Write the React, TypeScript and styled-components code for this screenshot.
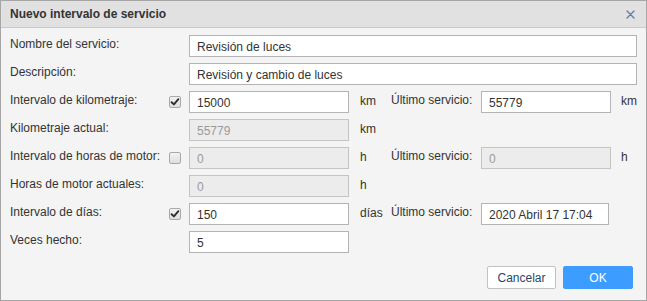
import React from "react";
import styled, { createGlobalStyle } from "styled-components";

const Global = createGlobalStyle`
  html, body { margin: 0; padding: 0; background: #ffffff; }
  body { font-family: "Liberation Sans", Arial, sans-serif; font-size: 12px; color: #333; }
  * { box-sizing: border-box; }
`;

const Dialog = styled.div`
  width: 647px;
  height: 301px;
  border: 1px solid #a6a6a6;
  background: #f4f4f4;
  display: flex;
  flex-direction: column;
`;

const Header = styled.div`
  height: 27px;
  flex: none;
  background: #e1e1e1;
  border-bottom: 1px solid #c9c9c9;
  display: flex;
  align-items: center;
  justify-content: space-between;
  padding: 0 11px 0 9px;
`;

const Title = styled.div`
  font-weight: bold;
  font-size: 12px;
  color: #333;
`;

const Close = styled.button`
  border: 0;
  background: transparent;
  padding: 0;
  width: 10px;
  height: 10px;
  display: flex;
  align-items: center;
  justify-content: center;
  cursor: pointer;
`;

const Body = styled.div`
  flex: 1;
  display: flex;
  flex-direction: column;
  padding: 7px 9px 0 9px;
`;

const Form = styled.div`
  display: grid;
  grid-template-columns: 159px 20px 160px 42px 90px 130px 1fr;
  grid-auto-rows: 22px;
  row-gap: 6px;
`;

const Label = styled.div<{ $col?: number }>`
  grid-column: ${(p) => p.$col ?? 1};
  padding-top: 2px;
  line-height: 14px;
  white-space: nowrap;
  color: #333;
`;

const Unit = styled.div<{ $col: number }>`
  grid-column: ${(p) => p.$col};
  padding-top: 3px;
  padding-left: ${(p) => (p.$col === 7 ? 10 : 11)}px;
  line-height: 14px;
  color: #333;
`;

const CheckCell = styled.div`
  grid-column: 2;
  display: flex;
  align-items: center;
`;

const Box = styled.span<{ $checked: boolean }>`
  width: 12px;
  height: 12px;
  border: 1px solid #a9a9a9;
  border-radius: 2px;
  background: linear-gradient(#f3f3f3, #dedede);
  display: flex;
  align-items: center;
  justify-content: center;
`;

const Input = styled.input<{ $col: number; $span?: string; $w?: number }>`
  grid-column: ${(p) => p.$span ?? p.$col};
  width: ${(p) => (p.$w ? `${p.$w}px` : "100%")};
  height: 22px;
  margin: 0;
  border: 1px solid #b4b4b4;
  background: #fff;
  padding: 1px 4px 0 7px;
  font-family: "Liberation Sans", Arial, sans-serif;
  font-size: 12px;
  color: #333;
  outline: none;
  &:disabled {
    background: #ececec;
    border-color: #c4c4c4;
    color: #9a9a9a;
  }
`;

const Footer = styled.div`
  margin-top: auto;
  display: flex;
  justify-content: flex-end;
  gap: 7px;
  padding: 0 4px 11px 0;
`;

const Button = styled.button<{ $primary?: boolean }>`
  width: ${(p) => (p.$primary ? 70 : 69)}px;
  height: 23px;
  border-radius: 2px;
  font-family: "Liberation Sans", Arial, sans-serif;
  font-size: 12px;
  padding: 0;
  cursor: pointer;
  border: 1px solid ${(p) => (p.$primary ? "#3d9cff" : "#c2c2c2")};
  background: ${(p) => (p.$primary ? "#3d9cff" : "#ffffff")};
  color: ${(p) => (p.$primary ? "#ffffff" : "#28466b")};
`;

const Check = ({ checked }: { checked: boolean }) => (
  <CheckCell>
    <Box $checked={checked}>
      {checked && (
        <svg width="10" height="10" viewBox="0 0 10 10">
          <path d="M1.6 5.2 L3.9 7.4 L8.4 2.2" stroke="#2e2e2e" strokeWidth="1.9" fill="none" strokeLinecap="round" strokeLinejoin="round" />
        </svg>
      )}
    </Box>
  </CheckCell>
);

export default function App() {
  return (
    <>
      <Global />
      <Dialog>
        <Header>
          <Title>Nuevo intervalo de servicio</Title>
          <Close aria-label="Cerrar">
            <svg width="9" height="9" viewBox="0 0 9 9">
              <path d="M1 1 L8 8 M8 1 L1 8" stroke="#5a7ea6" strokeWidth="1.3" strokeLinecap="round" />
            </svg>
          </Close>
        </Header>
        <Body>
          <Form>
            <Label>Nombre del servicio:</Label>
            <Input $col={3} $span="3 / 8" defaultValue="Revisión de luces" />

            <Label>Descripción:</Label>
            <Input $col={3} $span="3 / 8" defaultValue="Revisión y cambio de luces" />

            <Label>Intervalo de kilometraje:</Label>
            <Check checked />
            <Input $col={3} defaultValue="15000" />
            <Unit $col={4}>km</Unit>
            <Label $col={5}>Último servicio:</Label>
            <Input $col={6} defaultValue="55779" />
            <Unit $col={7}>km</Unit>

            <Label>Kilometraje actual:</Label>
            <Input $col={3} disabled defaultValue="55779" />
            <Unit $col={4}>km</Unit>

            <Label>Intervalo de horas de motor:</Label>
            <Check checked={false} />
            <Input $col={3} disabled defaultValue="0" />
            <Unit $col={4}>h</Unit>
            <Label $col={5}>Último servicio:</Label>
            <Input $col={6} disabled defaultValue="0" />
            <Unit $col={7}>h</Unit>

            <Label>Horas de motor actuales:</Label>
            <Input $col={3} disabled defaultValue="0" />
            <Unit $col={4}>h</Unit>

            <Label>Intervalo de días:</Label>
            <Check checked />
            <Input $col={3} defaultValue="150" />
            <Unit $col={4}>días</Unit>
            <Label $col={5}>Último servicio:</Label>
            <Input $col={6} $w={128} defaultValue="2020 Abril 17 17:04" />

            <Label>Veces hecho:</Label>
            <Input $col={3} defaultValue="5" />
          </Form>
          <Footer>
            <Button>Cancelar</Button>
            <Button $primary>OK</Button>
          </Footer>
        </Body>
      </Dialog>
    </>
  );
}
